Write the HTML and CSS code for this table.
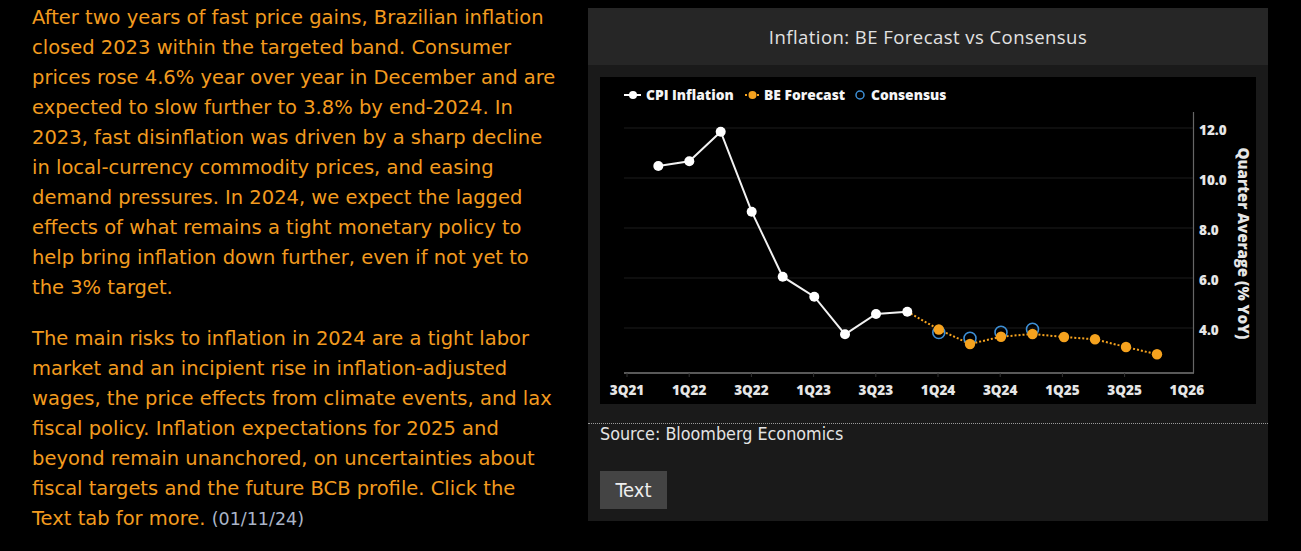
FILE: index.html
```html
<!DOCTYPE html>
<html>
<head>
<meta charset="utf-8">
<link rel="stylesheet" href="styles.css">
</head>
<body>
<div class="page">
  <div class="article">
    <p class="para">After two years of fast price gains, Brazilian inflation closed 2023 within the targeted band. Consumer prices rose 4.6% year over year in December and are expected to slow further to 3.8% by end-2024. In 2023, fast disinflation was driven by a sharp decline in local-currency commodity prices, and easing demand pressures. In 2024, we expect the lagged effects of what remains a tight monetary policy to help bring inflation down further, even if not yet to the 3% target.</p>
    <p class="para">The main risks to inflation in 2024 are a tight labor market and an incipient rise in inflation-adjusted wages, the price effects from climate events, and lax fiscal policy. Inflation expectations for 2025 and beyond remain unanchored, on uncertainties about fiscal targets and the future BCB profile. Click the Text tab for more. <span class="date">(01/11/24)</span></p>
  </div>
  <div class="panel">
    <div class="panel-title">Inflation: BE Forecast vs Consensus</div>
    <div class="chart-wrap">
      <svg class="chart" viewBox="600 77 656 327" width="656" height="327">
        <rect x="600" y="77" width="656" height="327" fill="#000"/>
        <g stroke="#1c1c1c" stroke-width="1">
          <line x1="624" y1="128" x2="1193" y2="128"/>
          <line x1="624" y1="178" x2="1193" y2="178"/>
          <line x1="624" y1="228" x2="1193" y2="228"/>
          <line x1="624" y1="278" x2="1193" y2="278"/>
          <line x1="624" y1="328" x2="1193" y2="328"/>
        </g>
        <line x1="624" y1="373" x2="1194" y2="373" stroke="#777" stroke-width="1.5"/>
        <line x1="1193.5" y1="112" x2="1193.5" y2="373" stroke="#666" stroke-width="1.2"/>
        <g stroke="#333" stroke-width="1">
          <line x1="627" y1="373" x2="627" y2="377"/>
          <line x1="689.2" y1="373" x2="689.2" y2="377"/>
          <line x1="751.4" y1="373" x2="751.4" y2="377"/>
          <line x1="813.6" y1="373" x2="813.6" y2="377"/>
          <line x1="875.8" y1="373" x2="875.8" y2="377"/>
          <line x1="938" y1="373" x2="938" y2="377"/>
          <line x1="1000.2" y1="373" x2="1000.2" y2="377"/>
          <line x1="1062.4" y1="373" x2="1062.4" y2="377"/>
          <line x1="1124.6" y1="373" x2="1124.6" y2="377"/>
        </g>
        <g class="legend">
          <line x1="624" y1="95" x2="641" y2="95" stroke="#fff" stroke-width="2"/>
          <circle cx="633" cy="95" r="4" fill="#fff"/>
          <text x="646" y="100">CPI Inflation</text>
          <line x1="745" y1="95" x2="759" y2="95" stroke="#f5a21e" stroke-width="2" stroke-dasharray="2 2"/>
          <circle cx="752.5" cy="95" r="4" fill="#f5a21e"/>
          <text x="764" y="100">BE Forecast</text>
          <circle cx="860" cy="95" r="4" fill="none" stroke="#3d8fd6" stroke-width="1.5"/>
          <text x="871" y="100">Consensus</text>
        </g>
        <g class="ylab">
          <text x="1199" y="135">12.0</text>
          <text x="1199" y="185">10.0</text>
          <text x="1199" y="235">8.0</text>
          <text x="1199" y="285">6.0</text>
          <text x="1199" y="335">4.0</text>
        </g>
        <text class="ytitle" transform="translate(1237.5 243.5) rotate(90)" text-anchor="middle">Quarter Average (% YoY)</text>
        <g class="xlab" text-anchor="middle">
          <text x="627" y="394.5">3Q21</text>
          <text x="689.2" y="394.5">1Q22</text>
          <text x="751.4" y="394.5">3Q22</text>
          <text x="813.6" y="394.5">1Q23</text>
          <text x="875.8" y="394.5">3Q23</text>
          <text x="938" y="394.5">1Q24</text>
          <text x="1000.2" y="394.5">3Q24</text>
          <text x="1062.4" y="394.5">1Q25</text>
          <text x="1124.6" y="394.5">3Q25</text>
          <text x="1186.8" y="394.5">1Q26</text>
        </g>
        <polyline fill="none" stroke="#f5a21e" stroke-width="2" stroke-dasharray="2 2"
          points="907.3,311.7 938.8,329.5 970,344 1001,336.7 1032.5,334 1064,337 1095,339.3 1126,347 1157,354.3"/>
        <polyline fill="none" stroke="#f2f2f2" stroke-width="2"
          points="658.3,166 689.3,161.3 720.7,131.7 751.7,211.7 782.7,276.7 814.3,296.7 845,334.3 876,314 907.3,311.7"/>
        <g fill="#fff">
          <circle cx="658.3" cy="166" r="5"/>
          <circle cx="689.3" cy="161.3" r="5"/>
          <circle cx="720.7" cy="131.7" r="5"/>
          <circle cx="751.7" cy="211.7" r="5"/>
          <circle cx="782.7" cy="276.7" r="5"/>
          <circle cx="814.3" cy="296.7" r="5"/>
          <circle cx="845" cy="334.3" r="5"/>
          <circle cx="876" cy="314" r="5"/>
          <circle cx="907.3" cy="311.7" r="5"/>
        </g>
        <g fill="none" stroke="#3d8fd6" stroke-width="1.6">
          <circle cx="938.8" cy="332.5" r="6"/>
          <circle cx="970" cy="338.3" r="6"/>
          <circle cx="1001" cy="332.3" r="6"/>
          <circle cx="1032.5" cy="329.3" r="6"/>
        </g>
        <g fill="#f5a21e">
          <circle cx="938.8" cy="329.5" r="5.2"/>
          <circle cx="970" cy="344" r="5.2"/>
          <circle cx="1001" cy="336.7" r="5.2"/>
          <circle cx="1032.5" cy="334" r="5.2"/>
          <circle cx="1064" cy="337" r="5.2"/>
          <circle cx="1095" cy="339.3" r="5.2"/>
          <circle cx="1126" cy="347" r="5.2"/>
          <circle cx="1157" cy="354.3" r="5.2"/>
        </g>
      </svg>
    </div>
    <div class="source">Source: Bloomberg Economics</div>
    <div class="tabs">
      <button class="tab">Text</button>
    </div>
  </div>
</div>
</body>
</html>
```

FILE: styles.css
```css
html, body {
  margin: 0;
  padding: 0;
  background: #000;
}
.page {
  display: flex;
  align-items: flex-start;
}
.article {
  width: 524px;
  padding: 3px 0 0 32px;
  margin-right: 32px;
  font-family: "DejaVu Sans", sans-serif;
  font-size: 19.5px;
  line-height: 30px;
  color: #f29b1f;
}
.para {
  margin: 0 0 21px 0;
}
.date {
  color: #aab5c8;
  font-size: 17.5px;
  line-height: 20px;
}
.panel {
  width: 680px;
  height: 513px;
  margin-top: 8px;
  background: #1a1a1a;
}
.panel-title {
  height: 57px;
  background: #262626;
  display: flex;
  align-items: center;
  justify-content: center;
  font-family: "Open Sans", sans-serif;
  font-size: 18.5px;
  letter-spacing: 0.45px;
  color: #e2e2e2;
}
.chart-wrap {
  padding: 12px 12px 0 12px;
}
.chart {
  display: block;
}
.chart text {
  font-family: "Open Sans", sans-serif;
  font-weight: 800;
  fill: #e6e6e6;
}
.legend text {
  font-size: 13.8px;
  fill: #f4f4f4;
}
.ylab text {
  font-size: 13.5px;
}
.xlab text {
  font-size: 13.5px;
}
.ytitle {
  font-size: 15px;
}
.source {
  margin-top: 19px;
  border-top: 1px dotted #9a9a9a;
  padding: 0 12px;
  font-family: "DejaVu Sans Condensed", "DejaVu Sans", sans-serif;
  font-size: 17.8px;
  line-height: 20px;
  color: #e4e4e4;
}
.tabs {
  padding: 27px 12px 0 12px;
}
.tab {
  display: block;
  width: 67px;
  height: 38px;
  border: none;
  padding: 0;
  background: #444;
  font-family: "DejaVu Sans Condensed", "DejaVu Sans", sans-serif;
  font-size: 20px;
  color: #eee;
}
```
